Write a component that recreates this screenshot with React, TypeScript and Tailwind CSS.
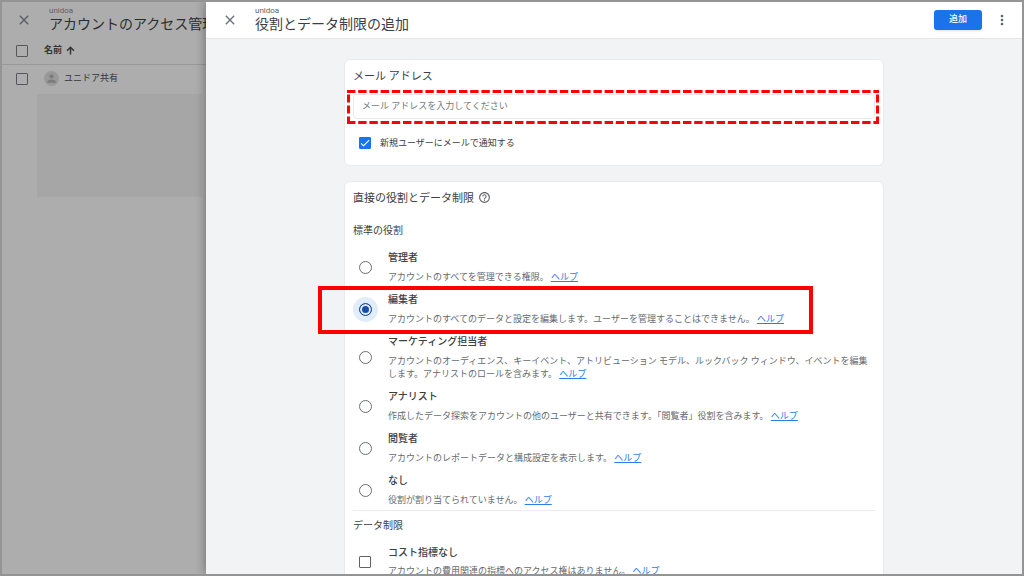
import { useState } from "react";
import { MdCheck, MdClose, MdHelpOutline, MdMoreVert, MdPerson } from "react-icons/md";

const roles = [
  { id: "admin", name: "管理者", text: "アカウントのすべてを管理できる権限。" },
  {
    id: "editor",
    name: "編集者",
    text: "アカウントのすべてのデータと設定を編集します。ユーザーを管理することはできません。",
    marked: true,
  },
  {
    id: "marketer",
    name: "マーケティング担当者",
    text: "アカウントのオーディエンス、キーイベント、アトリビューション モデル、ルックバック ウィンドウ、イベントを編集します。アナリストのロールを含みます。",
  },
  {
    id: "analyst",
    name: "アナリスト",
    text: "作成したデータ探索をアカウントの他のユーザーと共有できます。「閲覧者」役割を含みます。",
  },
  { id: "viewer", name: "閲覧者", text: "アカウントのレポートデータと構成設定を表示します。" },
  { id: "none", name: "なし", text: "役割が割り当てられていません。" },
];

const boxClass = "block size-3 shrink-0 appearance-none rounded-[1px] border";
const cardClass = "rounded-md border border-[#e8eaed] bg-white px-2 pt-[9px] pb-4 text-[#3c4043]";

function HelpLink() {
  return (
    <a href="#help" className="text-[#2b7de9] underline">
      ヘルプ
    </a>
  );
}

function ArrowUp() {
  return (
    <svg width="9" height="9" viewBox="0 0 9 9" fill="none" stroke="currentColor" strokeWidth="1.5" aria-hidden="true">
      <path d="M4.5 8.5V1.5M1 4.8L4.5 1.3L8 4.8" />
    </svg>
  );
}

function Heading({ title, tone }: { title: string; tone: string }) {
  return (
    <div className="min-w-0">
      <p className="text-[8px] leading-2 text-[#5f6368]">unidoa</p>
      <h1 className={`text-[14px] leading-[18px] whitespace-nowrap ${tone}`}>{title}</h1>
    </div>
  );
}

function AccountPanel() {
  return (
    <aside className="w-[204px] shrink-0 overflow-hidden bg-[#adadad] text-[#343536]">
      <header className="flex h-9 items-center gap-[17px] pl-3.5">
        <button type="button" aria-label="閉じる" className="shrink-0 text-[#5a5c5f]">
          <MdClose size={16} />
        </button>
        <Heading title="アカウントのアクセス管理" tone="text-[#2c2d2f]" />
      </header>
      <table className="w-full table-fixed text-left text-[9px]">
        <thead>
          <tr className="h-[26px] border-b border-[#999999]">
            <th className="w-[42px] pl-3.5">
              <input type="checkbox" aria-label="すべて選択" className={`${boxClass} border-[#55575a]`} />
            </th>
            <th className="font-bold">
              <span className="flex items-center gap-1">
                名前
                <ArrowUp />
              </span>
            </th>
          </tr>
        </thead>
        <tbody>
          <tr className="h-[29px]">
            <td className="pl-3.5">
              <input type="checkbox" aria-label="ユニドア共有を選択" className={`${boxClass} border-[#55575a]`} />
            </td>
            <td>
              <span className="flex items-center gap-[5px]">
                <span className="flex size-[15px] items-center justify-center rounded-full bg-[#999999] text-[#7c7c7c]">
                  <MdPerson size={13} />
                </span>
                ユニドア共有
              </span>
            </td>
          </tr>
        </tbody>
      </table>
      <div className="mt-px mr-1 ml-[35px] h-[103px] bg-[#a6a6a6]" />
    </aside>
  );
}

function DashedMark() {
  return (
    <svg
      className="pointer-events-none absolute -top-1 -left-1.5 h-[34px] w-[calc(100%+10px)]"
      stroke="#ff0000"
      strokeWidth="3"
      aria-hidden="true"
    >
      <line x1="0" y1="1.5" x2="100%" y2="1.5" strokeDasharray="8.4 2.8" />
      <line x1="0" y1="32.5" x2="100%" y2="32.5" strokeDasharray="8.4 2.8" />
      <line x1="1.5" y1="4.5" x2="1.5" y2="34" strokeDasharray="8 3" />
      <svg x="100%" overflow="visible">
        <line x1="-1.5" y1="4.5" x2="-1.5" y2="34" strokeDasharray="8 3" />
      </svg>
    </svg>
  );
}

function EmailCard() {
  const [notify, setNotify] = useState(true);
  return (
    <section className={cardClass}>
      <label htmlFor="email" className="block text-[11px] leading-4">
        メール アドレス
      </label>
      <div className="relative mt-[9px]">
        <input
          id="email"
          type="email"
          placeholder="メール アドレスを入力してください"
          className="block h-[25px] w-full rounded-sm border border-[#e8eaed] px-2 pb-0.5 text-[9px] outline-none placeholder:text-[#74787d]"
        />
        <DashedMark />
      </div>
      <div className="mt-[18px] flex items-center gap-[9px] pl-1.5">
        <span className="grid size-3 text-white">
          <input
            id="notify"
            type="checkbox"
            checked={notify}
            onChange={(e) => setNotify(e.target.checked)}
            className={`${boxClass} col-start-1 row-start-1 border-[#5f6368] checked:border-[#1a73e8] checked:bg-[#1a73e8]`}
          />
          {notify && <MdCheck size={12} className="pointer-events-none col-start-1 row-start-1" />}
        </span>
        <label htmlFor="notify" className="text-[9px] leading-3">
          新規ユーザーにメールで通知する
        </label>
      </div>
    </section>
  );
}

function RolesCard() {
  const [role, setRole] = useState("editor");
  return (
    <section className={cardClass}>
      <h2 className="flex items-start gap-1 text-[11px] leading-4">
        直接の役割とデータ制限
        <MdHelpOutline size={13} className="text-[#5f6368]" />
      </h2>
      <h3 className="mt-4 text-[10px] leading-4">標準の役割</h3>
      <div role="radiogroup" aria-label="標準の役割" className="mt-[11px] flex flex-col gap-2">
        {roles.map((r) => (
          <div key={r.id} className="relative flex items-center gap-4 pl-1.5">
            <input
              id={r.id}
              type="radio"
              name="role"
              checked={role === r.id}
              onChange={() => setRole(r.id)}
              className="size-[13px] shrink-0 appearance-none rounded-full border border-[#6b6f74] checked:border-[#174ea6] checked:bg-[#174ea6] checked:shadow-[inset_0_0_0_2px_#e1ecfd,0_0_0_6px_#e1ecfd]"
            />
            <div>
              <label htmlFor={r.id} className="block text-[10px] leading-4 font-medium">
                {r.name}
              </label>
              <p className="mt-[5px] text-[9px] leading-[13px] text-[#666a6f]">
                {r.text} <HelpLink />
              </p>
            </div>
            {r.marked && (
              <div className="pointer-events-none absolute -top-1.5 right-[62px] -bottom-2 -left-[35px] border-4 border-[#ff0000]" />
            )}
          </div>
        ))}
      </div>
      <hr className="mt-[3px] border-[#ebecee]" />
      <h3 className="mt-[7px] text-[10px] leading-4">データ制限</h3>
      <div className="mt-[11px] flex items-center gap-[17px] pl-1.5">
        <input id="cost" type="checkbox" className={`${boxClass} border-[#5f6368]`} />
        <div>
          <label htmlFor="cost" className="block text-[10px] leading-4 font-medium">
            コスト指標なし
          </label>
          <p className="mt-1 text-[9px] leading-[13px] text-[#666a6f]">
            アカウントの費用関連の指標へのアクセス権はありません。 <HelpLink />
          </p>
        </div>
      </div>
    </section>
  );
}

export default function App() {
  return (
    <div className="flex h-screen overflow-hidden border-2 border-[#949494] font-[Roboto,'Noto_Sans_CJK_JP',sans-serif]">
      <AccountPanel />
      <main className="relative flex min-w-0 flex-1 flex-col bg-[#f1f3f4] shadow-[0_0_10px_rgba(0,0,0,0.4)]">
        <header className="flex h-[37px] shrink-0 items-center border-b border-[#e4e6e8] bg-white pr-3 pl-4">
          <button type="button" aria-label="閉じる" className="mr-[17px] text-[#6b6f74]">
            <MdClose size={16} />
          </button>
          <Heading title="役割とデータ制限の追加" tone="text-[#3c4043]" />
          <button
            type="button"
            className="ml-auto h-5 w-12 rounded-[3px] bg-[#1a73e8] text-[9px] font-medium text-white shadow-sm"
          >
            追加
          </button>
          <button type="button" aria-label="その他" className="ml-3 text-[#5f6368]">
            <MdMoreVert size={16} />
          </button>
        </header>
        <div className="min-h-0 flex-1 overflow-hidden pt-5">
          <div className="mx-auto flex max-w-[540px] flex-col gap-[15px]">
            <EmailCard />
            <RolesCard />
          </div>
        </div>
      </main>
    </div>
  );
}
